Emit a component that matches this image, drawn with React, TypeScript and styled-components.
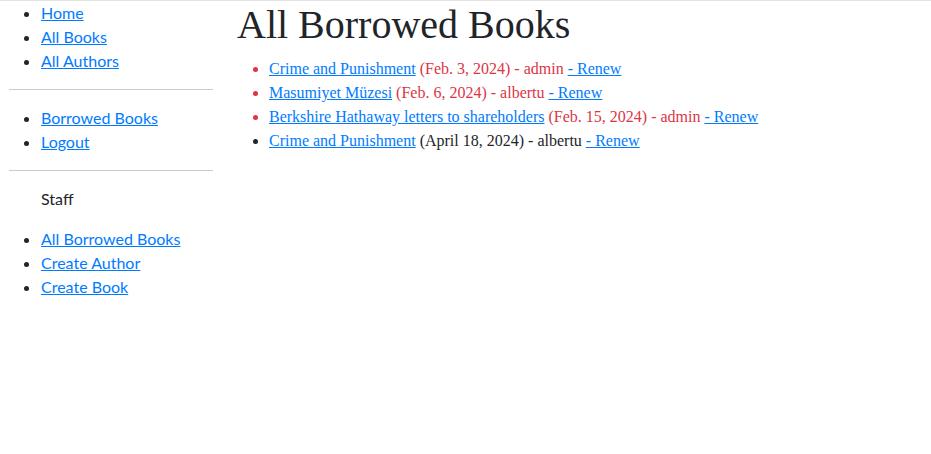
import React from "react";
import styled, { createGlobalStyle } from "styled-components";

const Global = createGlobalStyle`
  html, body { margin: 0; padding: 0; background: #fff; }
  body { border-top: 1px solid #e3e3e3; color: #212529; font-family: "Liberation Serif", serif; }
`;

const Page = styled.div`
  display: flex;
  align-items: flex-start;
`;

const Sidebar = styled.nav`
  width: 212px;
  flex: none;
  padding-left: 1px;
  font-family: "Lato", "Noto Sans", sans-serif;
  font-size: 16px;
  line-height: 24px;
`;

const NavList = styled.ul`
  margin: 0 0 16px;
  padding-left: 40px;
`;

const NavItem = styled.li`
  color: #212529;
`;

const NavLink = styled.a`
  color: #007bff;
  text-decoration: underline;
`;

const Rule = styled.hr`
  margin: 0 0 16px 8px;
  border: 0;
  border-top: 1px solid #cccccc;
  height: 0;
`;

const SectionLabel = styled.p`
  margin: 0 0 16px;
  padding-left: 40px;
  color: #212529;
`;

const Main = styled.main`
  flex: 1;
  padding-left: 24px;
`;

const Title = styled.h1`
  margin: 0 0 8px;
  font-family: "Liberation Serif", serif;
  font-weight: 400;
  font-size: 40px;
  line-height: 48px;
  color: #212529;
`;

const BookList = styled.ul`
  margin: 0;
  padding-left: 32px;
  font-size: 16px;
  line-height: 24px;
`;

const BookItem = styled.li<{ $overdue: boolean }>`
  color: ${(p) => (p.$overdue ? "#dc3545" : "#212529")};
`;

const BookLink = styled.a`
  color: #007bff;
  text-decoration: underline;
`;

const loans = [
  { title: "Crime and Punishment", date: "Feb. 3, 2024", user: "admin", overdue: true },
  { title: "Masumiyet Müzesi", date: "Feb. 6, 2024", user: "albertu", overdue: true },
  { title: "Berkshire Hathaway letters to shareholders", date: "Feb. 15, 2024", user: "admin", overdue: true },
  { title: "Crime and Punishment", date: "April 18, 2024", user: "albertu", overdue: false },
];

export default function App() {
  return (
    <>
      <Global />
      <Page>
        <Sidebar>
          <NavList>
            <NavItem><NavLink href="#">Home</NavLink></NavItem>
            <NavItem><NavLink href="#">All Books</NavLink></NavItem>
            <NavItem><NavLink href="#">All Authors</NavLink></NavItem>
          </NavList>
          <Rule />
          <NavList>
            <NavItem><NavLink href="#">Borrowed Books</NavLink></NavItem>
            <NavItem><NavLink href="#">Logout</NavLink></NavItem>
          </NavList>
          <Rule />
          <SectionLabel>Staff</SectionLabel>
          <NavList>
            <NavItem><NavLink href="#">All Borrowed Books</NavLink></NavItem>
            <NavItem><NavLink href="#">Create Author</NavLink></NavItem>
            <NavItem><NavLink href="#">Create Book</NavLink></NavItem>
          </NavList>
        </Sidebar>
        <Main>
          <Title>All Borrowed Books</Title>
          <BookList>
            {loans.map((l, i) => (
              <BookItem key={i} $overdue={l.overdue}>
                <BookLink href="#">{l.title}</BookLink> ({l.date}) - {l.user}{" "}
                <BookLink href="#">- Renew</BookLink>
              </BookItem>
            ))}
          </BookList>
        </Main>
      </Page>
    </>
  );
}
